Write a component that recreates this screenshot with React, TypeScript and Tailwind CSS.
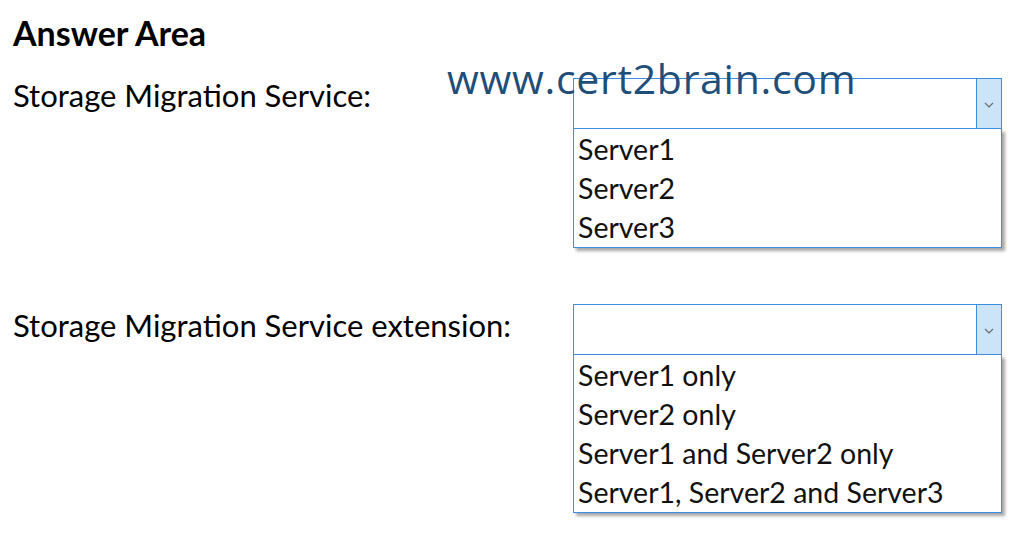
import React from "react";

const font = { fontFamily: "Lato, 'Open Sans', sans-serif" };

function Chevron() {
  return (
    <svg width="10" height="6" viewBox="0 0 10 6" fill="none">
      <path d="M1 1 L5 5 L9 1" stroke="#6b6b6b" strokeWidth="1.2" />
    </svg>
  );
}

function Dropdown({ items }: { items: string[] }) {
  return (
    <div className="w-[429px]">
      <div className="flex h-[51px] border border-[#3d8ee0] bg-white">
        <div className="flex-1" />
        <div className="flex w-[25px] items-center justify-center border-l border-[#3d8ee0] bg-[#cce4f7] pt-[2px]">
          <Chevron />
        </div>
      </div>
      <div className="border border-t-0 border-[#3d8ee0] bg-white pl-[4px] pt-[1px] shadow-[3px_3px_3px_rgba(0,0,0,0.35)]">
        {items.map((t) => (
          <div key={t} className="h-[39px] text-[28.5px] leading-[39px] text-[#111]">
            {t}
          </div>
        ))}
      </div>
    </div>
  );
}

export default function App() {
  return (
    <div className="relative h-[534px] w-[1023px] bg-white text-black" style={font}>
      <div className="pl-[13px] pt-[14px]">
        <div className="text-[34px] font-bold leading-[38px]">Answer Area</div>
        <div className="mt-[26px] flex">
          <div className="w-[560px] text-[31px] leading-[34px]">Storage Migration Service:</div>
          <Dropdown items={["Server1", "Server2", "Server3"]} />
        </div>
        <div className="mt-[56px] flex">
          <div className="w-[560px] pt-[4px] text-[31px] leading-[34px]">Storage Migration Service extension:</div>
          <Dropdown
            items={["Server1 only", "Server2 only", "Server1 and Server2 only", "Server1, Server2 and Server3"]}
          />
        </div>
      </div>
      <div
        className="absolute left-[447px] top-[54px] text-[41px] leading-[48px] text-[#1f4e79]"
        style={{ fontFamily: "'Open Sans', sans-serif", letterSpacing: "0.7px" }}
      >
        www.cert2brain.com
      </div>
    </div>
  );
}
